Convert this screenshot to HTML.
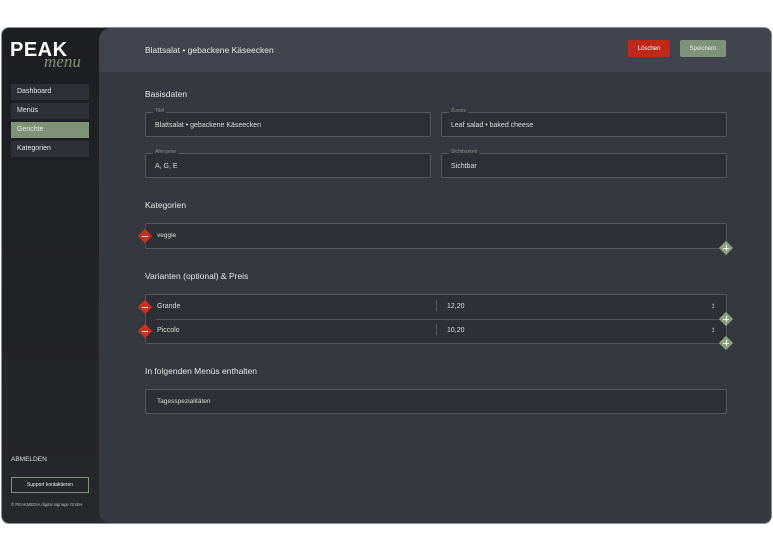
<!DOCTYPE html><html><head><meta charset="utf-8"><style>
*{box-sizing:border-box;margin:0;padding:0}
body{width:773px;height:552px;background:#fff;font-family:"Liberation Sans",sans-serif;position:relative;overflow:hidden;color:#ddd}
.frame{position:absolute;left:1px;top:27px;width:771px;height:497px;border:1px solid #8b8e97;border-radius:8px;background:linear-gradient(#1d1e21,#27282c);overflow:hidden}
.main{position:absolute;left:97px;top:0;right:0;bottom:0;background:#363840;border-radius:12px 0 0 12px;overflow:hidden}
.hdr{position:absolute;left:0;top:0;right:0;height:44px;background:#42444d}
.a{position:absolute;white-space:nowrap}
.nav{position:absolute;left:9px;width:78px;height:16px;background:#2f3036;font-size:7px;padding:4px 0 0 6px;color:#e8e8e8}
.btn{position:absolute;height:17px;font-size:6px;display:flex;align-items:center;justify-content:center;border-radius:2px}
.h{font-size:8.5px;color:#e6e6e6}
.f{position:absolute;border:1px solid #55575f;border-radius:2px;background:#2f3035}
.f .l{position:absolute;top:-5px;left:7px;font-size:5px;color:#888;background:linear-gradient(#363840 50%,#2f3035 50%);padding:0 2px}
.f .v{position:absolute;left:9px;font-size:7px;color:#ddd}
.dr,.dg{position:absolute;width:10px;height:10px;transform:rotate(45deg)}
.dr{background:#c9301e}.dg{background:#8aa07f}
.dm{position:absolute;width:6px;height:1.3px;background:#fff}
.dp{position:absolute;width:6px;height:6px}
.dp:before{content:"";position:absolute;left:0;top:2.5px;width:6px;height:1px;background:#eee}
.dp:after{content:"";position:absolute;left:2.5px;top:0;width:1px;height:6px;background:#eee}
</style></head><body>
<div class="frame">
 <div class="a" style="left:8px;top:11px;font-size:20px;font-weight:bold;color:#fff;letter-spacing:.5px">PEAK</div>
 <div class="a" style="left:42px;top:24px;font-size:17px;font-style:italic;color:#7d9276;font-family:'Liberation Serif',serif">menu</div>
 <div class="nav" style="top:56px">Dashboard</div>
 <div class="nav" style="top:75px">Menüs</div>
 <div class="nav" style="top:94px;background:#7d9276">Gerichte</div>
 <div class="nav" style="top:113px">Kategorien</div>
 <div class="a" style="left:9px;top:428px;font-size:6.5px;color:#ddd">ABMELDEN</div>
 <div class="a" style="left:9px;top:449px;width:78px;height:16px;border:1px solid #7d9276;font-size:5px;text-align:center;line-height:14px;color:#eee">Support kontaktieren</div>
 <div class="a" style="left:9px;top:474px;font-size:4.3px;color:#bbb">© PEAKMEDIA digital signage GmbH</div>
 <div class="main">
  <div class="hdr"></div>
  <div class="a" style="left:46px;top:17px;font-size:8.5px;color:#e6e6e6">Blattsalat • gebackene Käseecken</div>
  <div class="btn" style="left:529px;top:12px;width:42px;background:#c0281a;color:#fff">Löschen</div>
  <div class="btn" style="left:581px;top:12px;width:46px;background:#7d9276;color:#eee">Speichern</div>
  <div class="a h" style="left:46px;top:61px">Basisdaten</div>
  <div class="f" style="left:46px;top:84px;width:286px;height:25px"><span class="l">Titel</span><span class="v" style="top:9px">Blattsalat • gebackene Käseecken</span></div>
  <div class="f" style="left:342px;top:84px;width:286px;height:25px"><span class="l">Zusatz</span><span class="v" style="top:9px">Leaf salad • baked cheese</span></div>
  <div class="f" style="left:46px;top:125px;width:286px;height:25px"><span class="l">Allergene</span><span class="v" style="top:9px">A, G, E</span></div>
  <div class="f" style="left:342px;top:125px;width:286px;height:25px"><span class="l">Sichtbarkeit</span><span class="v" style="top:9px">Sichtbar</span></div>
  <div class="a h" style="left:46px;top:172px">Kategorien</div>
  <div class="f" style="left:46px;top:195px;width:582px;height:26px"><span class="v" style="top:8px;left:11px;font-size:6.5px">veggie</span></div>
  <div class="a h" style="left:46px;top:243px">Varianten (optional) &amp; Preis</div>
  <div class="f" style="left:46px;top:266px;width:582px;height:50px">
   <div class="a" style="left:10px;top:24px;right:0;height:1px;background:#55575f"></div>
   <span class="v" style="top:8px;left:11px">Grande</span><span class="v" style="top:32px;left:11px">Piccolo</span>
   <div class="a" style="left:290px;top:5px;width:1px;height:11px;background:#55575f"></div>
   <div class="a" style="left:290px;top:29px;width:1px;height:11px;background:#55575f"></div>
   <span class="v" style="top:8px;left:301px">12,20</span><span class="v" style="top:32px;left:301px">10,20</span>
   <span class="v" style="top:6px;left:565px;font-size:8px">↕</span><span class="v" style="top:30px;left:565px;font-size:8px">↕</span>
  </div>
  <div class="a h" style="left:46px;top:338px">In folgenden Menüs enthalten</div>
  <div class="f" style="left:46px;top:361px;width:582px;height:25px"><span class="v" style="top:8px;left:11px;font-size:6.5px">Tagesspezialitäten</span></div>
 </div>
</div>
<div class="dr" style="left:140px;top:231px"></div><div class="dm" style="left:142px;top:235.5px"></div>
<div class="dr" style="left:140px;top:302px"></div><div class="dm" style="left:142px;top:306.5px"></div>
<div class="dr" style="left:140px;top:326px"></div><div class="dm" style="left:142px;top:330.5px"></div>
<div class="dg" style="left:721px;top:243px"></div><div class="dp" style="left:723px;top:245px"></div>
<div class="dg" style="left:721px;top:314px"></div><div class="dp" style="left:723px;top:316px"></div>
<div class="dg" style="left:721px;top:338px"></div><div class="dp" style="left:723px;top:340px"></div>
</body></html>
